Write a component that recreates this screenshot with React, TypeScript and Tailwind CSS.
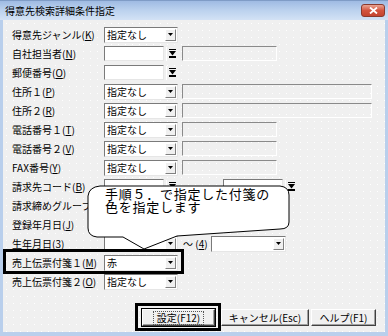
import React from 'react';

const sunken =
  'border border-t-[#7a7a7a] border-l-[#7a7a7a] border-r-[#e6e6e6] border-b-[#e6e6e6]';

function Label({ text, k }: { text: string; k?: string }) {
  return (
    <div className="w-[101px] shrink-0 pl-[9px] text-[10px] leading-none whitespace-nowrap">
      {text}
      {k && (
        <>
          (<span className="underline">{k}</span>)
        </>
      )}
    </div>
  );
}

function DropBtn() {
  return (
    <div className="w-[11px] h-[12px] mr-[1px] shrink-0 bg-[#f0f0f0] border border-t-white border-l-white border-r-[#808080] border-b-[#808080] flex items-center justify-center">
      <svg width="5" height="3" viewBox="0 0 5 3">
        <path d="M0 0H5L2.5 3Z" fill="#000" />
      </svg>
    </div>
  );
}

function Combo({ className, value }: { className: string; value?: string }) {
  return (
    <div className={`${className} h-[16px] shrink-0 flex items-center bg-white ${sunken}`}>
      <span className="flex-1 pl-[2px] text-[10px] leading-none">{value}</span>
      <DropBtn />
    </div>
  );
}

function Browse({ className }: { className: string }) {
  return (
    <div className={`${className} flex items-center shrink-0`}>
      <div className={`w-[60px] h-[15px] bg-white ${sunken}`} />
      <div className="ml-[2px] w-[11px] h-[14px] bg-[#f0f0f0] border-l border-white flex items-center justify-center">
        <svg width="7" height="9" viewBox="0 0 7 9" fill="#000">
          <rect x="0" y="0" width="7" height="1" />
          <path d="M0 2H7L3.5 6.5Z" />
          <rect x="0" y="7" width="7" height="2" />
        </svg>
      </div>
    </div>
  );
}

function Box({ className }: { className: string }) {
  return (
    <div
      className={`${className} h-[15px] shrink-0 border border-t-[#8a8a8a] border-l-[#8a8a8a] border-r-white border-b-white`}
    />
  );
}

function Row({ children }: { children: React.ReactNode }) {
  return <div className="h-[19px] flex items-center">{children}</div>;
}

function Btn({ className, children }: { className: string; children: React.ReactNode }) {
  return (
    <div
      className={`${className} h-[17px] flex items-center justify-center bg-[#f0f0f0] text-[10px] leading-none border border-t-white border-l-white border-r-[#404040] border-b-[#404040] shadow-[inset_-1px_-1px_0_#a0a0a0]`}
    >
      {children}
    </div>
  );
}

export default function App() {
  return (
    <div className="relative w-[388px] h-[336px] bg-[#b9cfec] font-['Noto_Sans_CJK_JP','Noto_Sans_CJK_SC',sans-serif] text-black overflow-hidden">
      {/* title bar */}
      <div className="h-[20px] flex items-center pl-[5px] bg-linear-to-b from-[#9fbbe3] via-[#bcd2ee] to-[#d3e2f5] border-t border-[#7f9cc6]">
        <span className="text-[10px] leading-none">得意先検索詳細条件指定</span>
        <div className="ml-auto mr-[3px] w-[24px] h-[13px] rounded-[3px] bg-linear-to-b from-[#e8a493] via-[#d3543f] to-[#c4442f] border border-[#8a3a2e] flex items-center justify-center">
          <svg width="9" height="7" viewBox="0 0 9 7">
            <path d="M1 0.5L8 6.5M8 0.5L1 6.5" stroke="#fff" strokeWidth="1.8" />
          </svg>
        </div>
      </div>

      {/* body */}
      <div className="mx-[3px] h-[312px] pt-[5px] bg-[#f0f0f0] bg-[radial-gradient(circle,#ffffff_0.7px,transparent_0.9px)] bg-[length:7px_7px] flex flex-col">
        <Row>
          <Label text="得意先ジャンル" k="K" />
          <Combo className="w-[74px]" value="指定なし" />
        </Row>
        <Row>
          <Label text="自社担当者" k="N" />
          <Browse className="w-[74px]" />
          <Box className="ml-[4px] w-[95px]" />
        </Row>
        <Row>
          <Label text="郵便番号" k="O" />
          <Browse className="w-[74px]" />
        </Row>
        <Row>
          <Label text="住所１" k="P" />
          <Combo className="w-[74px]" value="指定なし" />
          <Box className="ml-[4px] w-[190px]" />
        </Row>
        <Row>
          <Label text="住所２" k="R" />
          <Combo className="w-[74px]" value="指定なし" />
          <Box className="ml-[4px] w-[190px]" />
        </Row>
        <Row>
          <Label text="電話番号１" k="T" />
          <Combo className="w-[74px]" value="指定なし" />
          <Box className="ml-[4px] w-[95px]" />
        </Row>
        <Row>
          <Label text="電話番号２" k="V" />
          <Combo className="w-[74px]" value="指定なし" />
          <Box className="ml-[4px] w-[95px]" />
        </Row>
        <Row>
          <Label text="FAX番号" k="Y" />
          <Combo className="w-[74px]" value="指定なし" />
          <Box className="ml-[4px] w-[95px]" />
        </Row>
        <Row>
          <Label text="請求先コード" k="B" />
          <Browse className="w-[74px]" />
          <Browse className="ml-[45px] w-[74px]" />
        </Row>
        <Row>
          <Label text="請求締めグループ" />
          <Combo className="w-[74px]" />
        </Row>
        <Row>
          <Label text="登録年月日" k="J" />
          <Combo className="w-[74px]" />
        </Row>
        <Row>
          <Label text="生年月日" k="3" />
          <Combo className="w-[74px]" />
          <span className="ml-[5px] text-[10px] leading-none whitespace-nowrap">
            ～ (<span className="underline">4</span>)
          </span>
          <Combo className="ml-[3px] w-[75px]" />
        </Row>
        <Row>
          <Label text="売上伝票付箋１" k="M" />
          <Combo className="w-[74px]" value="赤" />
        </Row>
        <Row>
          <Label text="売上伝票付箋２" k="O" />
          <Combo className="w-[74px]" value="指定なし" />
        </Row>

        <div className="mt-[18px] flex justify-end pr-[9px]">
          <Btn className="w-[73px] outline outline-1 outline-black">
            <span className="px-[3px] py-[1px] border border-dotted border-[#555]">設定(F12)</span>
          </Btn>
          <Btn className="ml-[6px] w-[88px]">キャンセル(Esc)</Btn>
          <Btn className="ml-[2px] w-[65px]">ヘルプ(F1)</Btn>
        </div>
      </div>

      {/* callout */}
      <svg
        className="absolute left-[84px] top-[180px]"
        width="210"
        height="74"
        viewBox="84 180 210 74"
      >
        <path
          d="M100 186 L280 186 Q289 187 289 195 L289 222 Q289 229 280 229 L177 236 L144 249 L123 237 L97 237 Q88 236 88 228 L88 196 Q89 187 100 186 Z"
          fill="#fff"
          stroke="#000"
          strokeWidth="1"
        />
      </svg>
      <div className="absolute left-[105px] top-[187px] text-[13px] leading-[13px] tracking-[0.75px] whitespace-pre-line">
        {'手順５．で指定した付箋の\n色を指定します'}
      </div>

      {/* highlight frames */}
      <div className="absolute left-[3px] top-[249px] w-[181px] h-[25px] border-[3px] border-black" />
      <div className="absolute left-[135px] top-[303px] w-[86px] h-[28px] border-[3px] border-black" />
    </div>
  );
}
